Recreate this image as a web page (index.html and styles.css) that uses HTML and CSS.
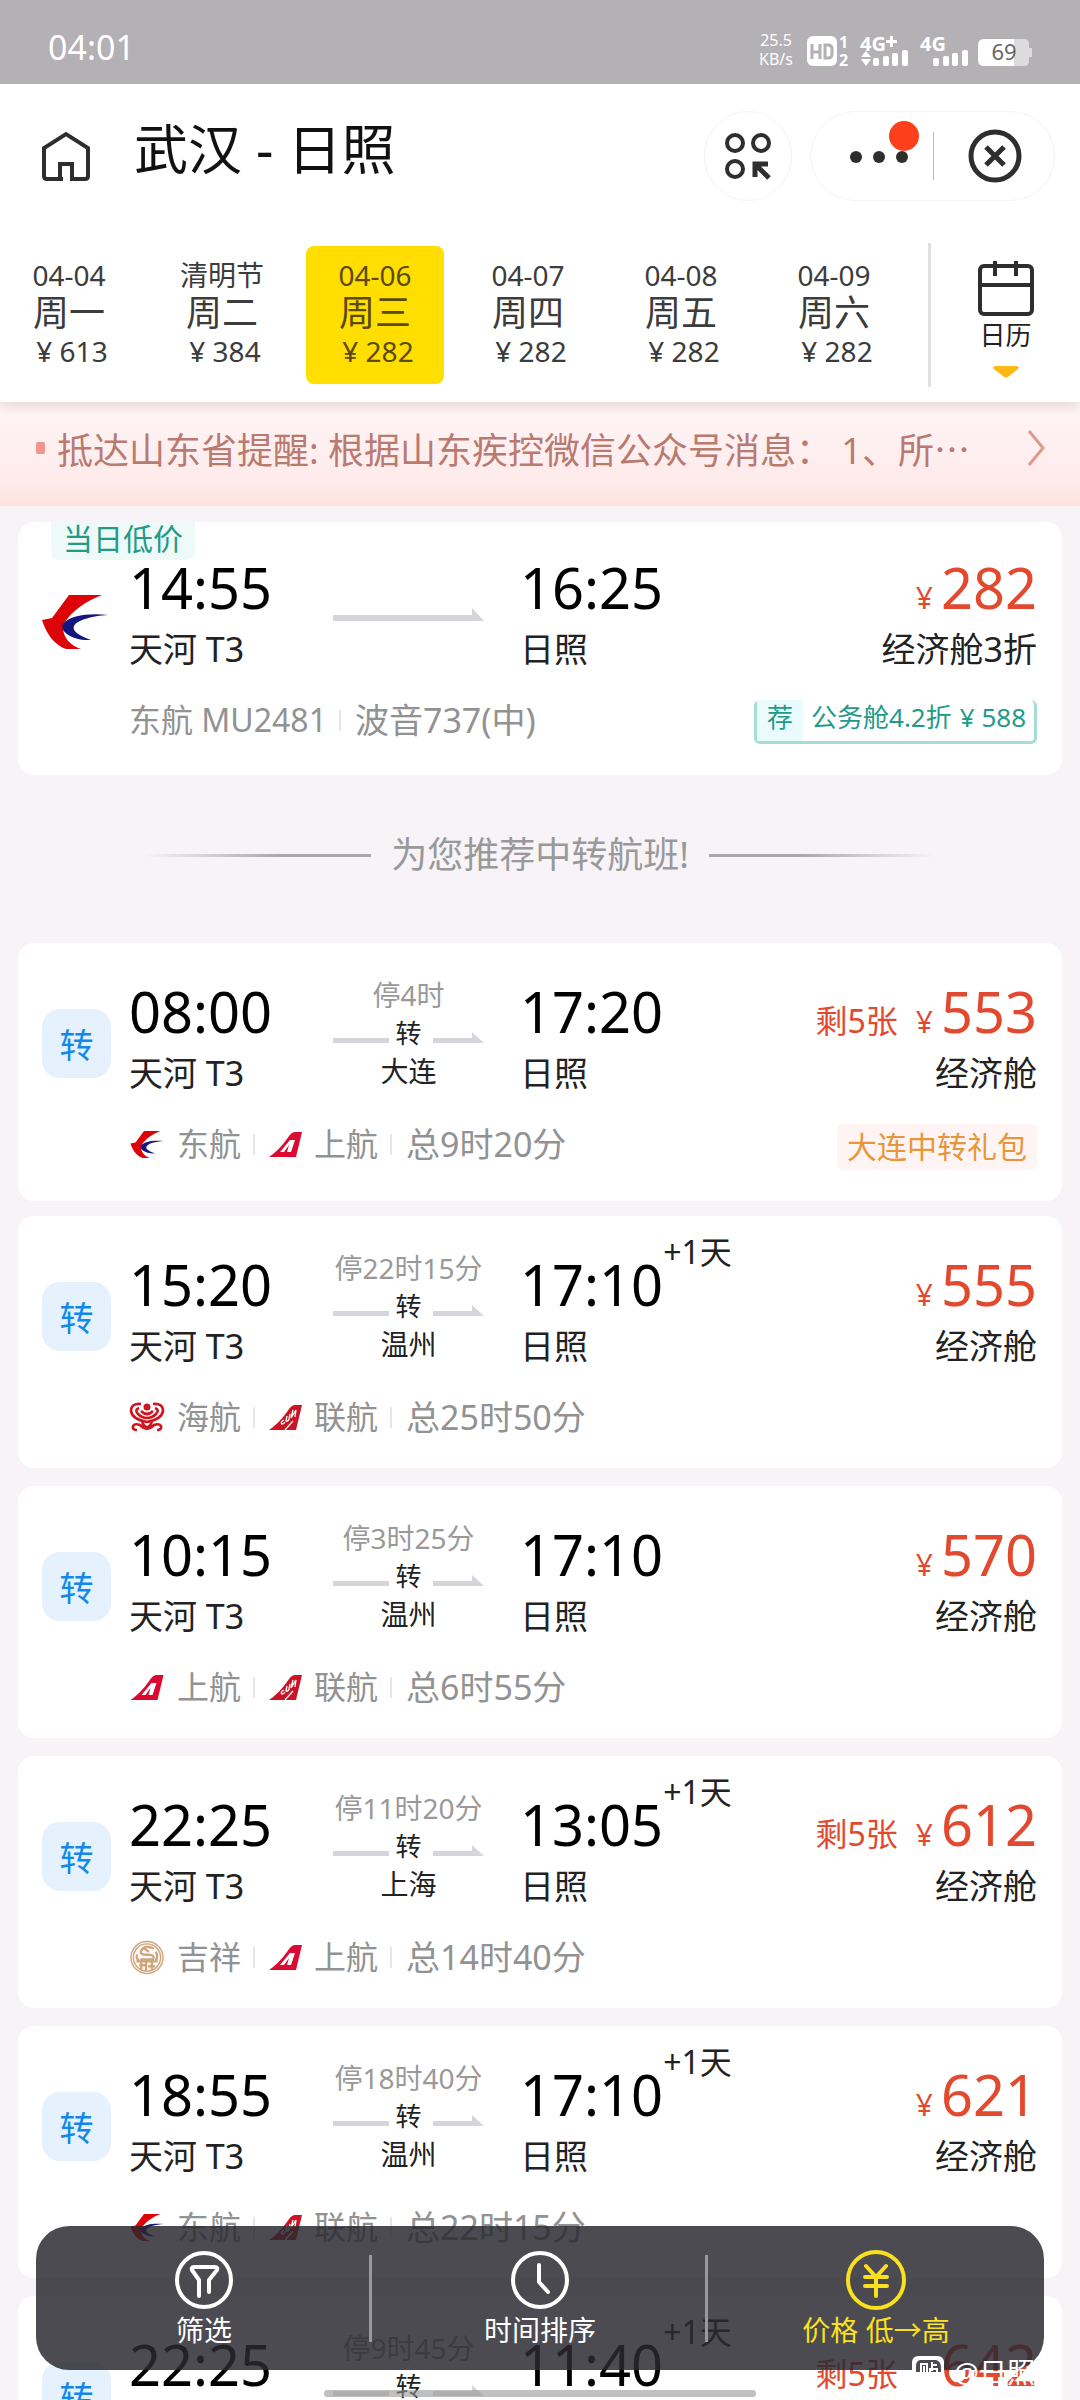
FILE: index.html
```html
<!DOCTYPE html>
<html lang="zh-CN">
<head>
<meta charset="utf-8">
<meta name="viewport" content="width=device-width, initial-scale=1">
<title>武汉 - 日照</title>
<link rel="stylesheet" href="styles.css">
</head>
<body>
<svg class="defs" aria-hidden="true">
  <symbol id="mu" viewBox="0 0 66 54">
    <path fill="#dc0406" d="M27 0H60C44 6 30 16 23 27C18 36 24 49 39 54H24C12 50 4 38 0 25L10 23Z"/>
    <path fill="#15157f" d="M66 20C48 18 28 20 21 29C17 36 30 46 49 45C36 40 30 36 32 31C35 25 50 21 66 20Z"/>
  </symbol>
  <symbol id="fm" viewBox="0 0 33 26">
    <path fill="#dc0a30" d="M0 26C10 19 15 12 20 5Q23 1 26 1H33L27 26Z"/>
    <path fill="#fff" d="M11 21L21 9H26L22 21H18L20 14L15 21Z"/>
  </symbol>
  <symbol id="kn" viewBox="0 0 33 26">
    <path fill="#c81424" d="M0 26C10 19 15 12 20 5Q23 1 26 1H33L27 26Z"/>
    <path fill="none" stroke="#fff" stroke-width="1.3" d="M15 16q-4 2-2 4q2 0 3-2M18 12l-1 5q2 1 3-2l1-5M24 6l-2 8l5-8l-1 7M16 26L24 17"/>
  </symbol>
  <symbol id="hu" viewBox="0 0 36 30">
    <g fill="none" stroke="#d0151f" stroke-width="2.6">
      <path d="M12 2Q2 1 2 9Q3 17 18 20Q33 17 34 9Q34 1 24 2"/>
      <path d="M10 6Q5 8 9 12Q13 16 18 16Q23 16 27 12Q31 8 26 6"/>
      <path d="M12 9Q18 15 24 9"/>
      <path d="M8 28Q3 28 4 24Q6 21 11 23Q18 30 25 23Q30 21 32 24Q33 28 28 28M13 20Q18 30 23 20"/>
    </g>
    <circle cx="18" cy="5" r="3.5" fill="#d0151f"/>
  </symbol>
  <symbol id="ho" viewBox="0 0 36 36">
    <g fill="none" stroke="#cfa57c" stroke-width="1.5">
      <circle cx="18" cy="18" r="16.5"/><circle cx="18" cy="18" r="14"/>
      <path stroke-width="2.4" d="M25 9Q16 4 12 11Q10 16 20 15Q27 16 24 20H11M8 15q-2 4 2 6M27 12q3 5 0 9M7 22H29M12 23v7M17 22v10M23 23v7M10 26h6M19 27h7M14 8l6 4"/>
    </g>
  </symbol>
  <symbol id="leg" viewBox="0 0 151 38"><path fill="#d5d5db" d="M0 24H56V29H0ZM100 24H139V18L151 29H100Z"/></symbol>
</svg>

<div class="app">
  <header class="head">
    <div class="status">
      <time>04:01</time>
      <svg width="278" height="84" viewBox="757 0 278 84" role="img" aria-label="信号与电量">
        <g fill="#fff">
          <text class="tiny" x="776" y="46" text-anchor="middle">25.5</text>
          <text class="tiny" x="776" y="65" text-anchor="middle">KB/s</text>
          <rect x="807" y="36" width="30" height="30" rx="6"/>
          <text class="net" x="839" y="48">1</text><text class="net" x="839" y="66">2</text>
          <text class="gen" x="860" y="51">4G</text><path d="M886 40h4v-4h3v4h4v3h-4v4h-3v-4h-4z"/>
          <path d="M861 57l5-6 5 6zM861 59h10l-5 7z"/>
          <rect x="873" y="58" width="6" height="8" rx="2"/><rect x="883" y="56" width="6" height="10" rx="2"/><rect x="892" y="53" width="6" height="13" rx="2"/><rect x="902" y="50" width="6" height="16" rx="2"/>
          <text class="gen" x="920" y="51">4G</text>
          <rect x="933" y="58" width="6" height="8" rx="2"/><rect x="943" y="56" width="6" height="10" rx="2"/><rect x="952" y="53" width="6" height="13" rx="2"/><rect x="962" y="50" width="6" height="16" rx="2"/>
        </g>
        <path fill="none" stroke="#b3b1b4" stroke-width="3" d="M812 44v15M820 44v15M812 52h8M825 45v13h3q4 0 4-4v-5q0-4-4-4z"/>
        <path fill="#dcdcdc" d="M1010 39h14q5 0 5 5v4h3v9h-3v4q0 5-5 5h-14z"/>
        <path fill="#fff" d="M984 39h30v27h-30q-6 0-6-6v-15q0-6 6-6z"/>
        <text class="batt" x="1004" y="60" text-anchor="middle">69</text>
      </svg>
    </div>
    <div class="nav">
      <button class="plain home" aria-label="首页">
        <svg width="48" height="50" viewBox="0 0 48 50" fill="none" stroke="#2e2e2e" stroke-width="4"><path d="M21 48H5Q2 48 2 45V17L24 3L46 17V45Q46 48 43 48H29M18 50V33H30V50"/></svg>
      </button>
      <h1>武汉 - 日照</h1>
      <button class="round" aria-label="服务">
        <svg width="46" height="48" viewBox="0 0 46 48" fill="none" stroke="#2e2e2e" stroke-width="4"><circle cx="10" cy="11" r="8"/><circle cx="36" cy="11" r="8"/><circle cx="10" cy="37" r="8"/><path stroke-width="5" d="M30 45V32H43M31 33L44 46"/></svg>
      </button>
      <div class="capsule">
        <button class="plain" aria-label="更多">
          <svg class="more" width="100" height="60" viewBox="0 0 100 60"><g fill="#2e2e2e"><circle cx="27" cy="31" r="6"/><circle cx="50" cy="31" r="6"/><circle cx="73" cy="31" r="6"/></g><circle cx="75" cy="10" r="15" fill="#fd3f1c"/></svg>
        </button>
        <i></i>
        <button class="plain" aria-label="关闭">
          <svg width="54" height="54" viewBox="0 0 54 54" fill="none" stroke="#2e2e2e"><circle cx="27" cy="27" r="24" stroke-width="5"/><path stroke-width="5" d="M18 18L36 36M36 18L18 36"/></svg>
        </button>
      </div>
    </div>
    <div class="dates">
      <div class="days">
        <button class="day"><span>04-04</span><b>周一</b><span class="fare">¥ 613</span></button>
        <button class="day"><span>清明节</span><b>周二</b><span class="fare">¥ 384</span></button>
        <button class="day on"><span>04-06</span><b>周三</b><span class="fare">¥ 282</span></button>
        <button class="day"><span>04-07</span><b>周四</b><span class="fare">¥ 282</span></button>
        <button class="day"><span>04-08</span><b>周五</b><span class="fare">¥ 282</span></button>
        <button class="day"><span>04-09</span><b>周六</b><span class="fare">¥ 282</span></button>
      </div>
      <button class="calendar">
        <svg width="58" height="56" viewBox="0 0 58 56" fill="none" stroke="#2e2e2e" stroke-width="4"><rect x="3" y="6" width="52" height="48" rx="4"/><path d="M3 25H55M18 1V16M39 1V16"/></svg>
        <span>日历</span>
        <svg width="26" height="12" viewBox="0 0 26 12"><path fill="#fdb813" d="M2 0H24Q27 1 25 3L15 11Q13 12 11 11L1 3Q-1 1 2 0Z"/></svg>
      </button>
    </div>
  </header>

  <a class="notice" href="#notice">
    <i></i>
    <span>抵达山东省提醒: 根据山东疾控微信公众号消息： 1、所⋯</span>
    <svg width="18" height="36" viewBox="0 0 18 36" fill="none" stroke="#e09a8c" stroke-width="3"><path d="M2 1L16 18L2 35"/></svg>
  </a>

  <main class="list">
    <article class="card nonstop">
      <span class="badge">当日低价</span>
      <svg class="carrier" width="66" height="54"><use href="#mu"/></svg>
      <div class="end"><time>14:55</time><p>天河 T3</p></div>
      <div class="route direct"><svg width="151" height="38" viewBox="0 0 151 38"><path fill="#d5d5db" d="M0 20H139V13L151 26H0Z"/></svg></div>
      <div class="end to"><time>16:25</time><p>日照</p></div>
      <div class="cost"><div class="sum"><small>¥</small><strong>282</strong></div><p>经济舱3折</p></div>
      <div class="meta"><span>东航 MU2481</span><i></i><span class="total">波音737(中)</span></div>
      <div class="tag upgrade"><b>荐</b><span>公务舱4.2折</span><span>¥ 588</span></div>
    </article>

    <h2 class="split"><i></i>为您推荐中转航班!<i class="r"></i></h2>

    <article class="card tagged">
      <span class="tile">转</span>
      <div class="end"><time>08:00</time><p>天河 T3</p></div>
      <div class="route"><em>停4时</em><span class="via"><svg width="151" height="38"><use href="#leg"/></svg><span>转</span></span><span>大连</span></div>
      <div class="end to"><time>17:20</time><p>日照</p></div>
      <div class="cost"><div class="sum"><span>剩5张</span><small>¥</small><strong>553</strong></div><p>经济舱</p></div>
      <div class="meta"><svg width="33" height="27"><use href="#mu"/></svg><span>东航</span><i></i><svg width="33" height="26"><use href="#fm"/></svg><span>上航</span><i></i><span class="total">总9时20分</span></div>
      <div class="tag gift">大连中转礼包</div>
    </article>

    <article class="card">
      <span class="tile">转</span>
      <div class="end"><time>15:20</time><p>天河 T3</p></div>
      <div class="route"><em>停22时15分</em><span class="via"><svg width="151" height="38"><use href="#leg"/></svg><span>转</span></span><span>温州</span></div>
      <div class="end to"><time>17:10<sup>+1天</sup></time><p>日照</p></div>
      <div class="cost"><div class="sum"><small>¥</small><strong>555</strong></div><p>经济舱</p></div>
      <div class="meta"><svg width="36" height="30"><use href="#hu"/></svg><span>海航</span><i></i><svg width="33" height="26"><use href="#kn"/></svg><span>联航</span><i></i><span class="total">总25时50分</span></div>
    </article>

    <article class="card">
      <span class="tile">转</span>
      <div class="end"><time>10:15</time><p>天河 T3</p></div>
      <div class="route"><em>停3时25分</em><span class="via"><svg width="151" height="38"><use href="#leg"/></svg><span>转</span></span><span>温州</span></div>
      <div class="end to"><time>17:10</time><p>日照</p></div>
      <div class="cost"><div class="sum"><small>¥</small><strong>570</strong></div><p>经济舱</p></div>
      <div class="meta"><svg width="33" height="26"><use href="#fm"/></svg><span>上航</span><i></i><svg width="33" height="26"><use href="#kn"/></svg><span>联航</span><i></i><span class="total">总6时55分</span></div>
    </article>

    <article class="card">
      <span class="tile">转</span>
      <div class="end"><time>22:25</time><p>天河 T3</p></div>
      <div class="route"><em>停11时20分</em><span class="via"><svg width="151" height="38"><use href="#leg"/></svg><span>转</span></span><span>上海</span></div>
      <div class="end to"><time>13:05<sup>+1天</sup></time><p>日照</p></div>
      <div class="cost"><div class="sum"><span>剩5张</span><small>¥</small><strong>612</strong></div><p>经济舱</p></div>
      <div class="meta"><svg width="35" height="35"><use href="#ho"/></svg><span>吉祥</span><i></i><svg width="33" height="26"><use href="#fm"/></svg><span>上航</span><i></i><span class="total">总14时40分</span></div>
    </article>

    <article class="card">
      <span class="tile">转</span>
      <div class="end"><time>18:55</time><p>天河 T3</p></div>
      <div class="route"><em>停18时40分</em><span class="via"><svg width="151" height="38"><use href="#leg"/></svg><span>转</span></span><span>温州</span></div>
      <div class="end to"><time>17:10<sup>+1天</sup></time><p>日照</p></div>
      <div class="cost"><div class="sum"><small>¥</small><strong>621</strong></div><p>经济舱</p></div>
      <div class="meta"><svg width="33" height="27"><use href="#mu"/></svg><span>东航</span><i></i><svg width="33" height="26"><use href="#kn"/></svg><span>联航</span><i></i><span class="total">总22时15分</span></div>
    </article>

    <article class="card">
      <span class="tile">转</span>
      <div class="end"><time>22:25</time></div>
      <div class="route"><em>停9时45分</em><span class="via"><svg width="151" height="38"><use href="#leg"/></svg><span>转</span></span></div>
      <div class="end to"><time>11:40<sup>+1天</sup></time></div>
      <div class="cost"><div class="sum"><span>剩5张</span><small>¥</small><strong>642</strong></div></div>
    </article>
  </main>

  <nav class="bar">
    <button>
      <svg width="60" height="60" viewBox="0 0 60 60" fill="none" stroke="#fff" stroke-width="4" stroke-linecap="round" stroke-linejoin="round"><circle cx="30" cy="30" r="27"/><path d="M25 46V30L18 20Q17 17 20 17H41Q44 17 43 20L35 30V42"/></svg>
      <span>筛选</span>
    </button>
    <button>
      <svg width="60" height="60" viewBox="0 0 60 60" fill="none" stroke="#fff" stroke-width="4" stroke-linecap="round"><circle cx="30" cy="30" r="27"/><path d="M29 15V32L38 42"/></svg>
      <span>时间排序</span>
    </button>
    <button class="on">
      <svg width="60" height="60" viewBox="0 0 60 60" fill="none" stroke="#fbe01f" stroke-width="4" stroke-linecap="round"><circle cx="30" cy="30" r="28"/><path d="M20 16L30 27L40 16M19 27H41M19 36H41M30 27V46"/></svg>
      <span>价格 低→高</span>
    </button>
  </nav>
  <div class="mark"><svg width="32" height="32" viewBox="0 0 32 32"><rect width="32" height="32" rx="6" fill="#fff"/><path fill="#4b4a52" d="M8 4H24Q29 5 29 12V16H4V10Q4 5 8 4Z"/><path fill="none" stroke="#fff" stroke-width="2" d="M9 17V8H15V17M12 10V19M20 6V15M20 9H25M18 17V13H25V17"/></svg><span>@日照</span></div>
  <div class="pill"></div>
</div>
</body>
</html>
```
FILE: styles.css
```css
* { box-sizing: border-box; }

body {
  margin: 0;
  background: #f7f3f7;
  color: #222;
  font-family: "Noto Sans", "Noto Sans CJK SC", sans-serif;
  font-size: 34px;
}

h1, h2, p { margin: 0; font-weight: 400; }
b, strong { font-weight: 400; }
i, em { font-style: normal; }
svg { display: block; flex: none; }

button {
  border: 0;
  padding: 0;
  background: none;
  color: inherit;
  font: inherit;
}

.defs { position: absolute; width: 0; height: 0; }

.app {
  position: relative;
  height: 100vh;
  overflow: hidden;
}

/* header */
.head {
  position: relative;
  z-index: 1;
  background: #fff;
  box-shadow: 0 4px 12px rgba(0, 0, 0, .12);
}

.status {
  display: flex;
  justify-content: space-between;
  align-items: center;
  height: 84px;
  padding: 0 45px 0 48px;
  background: #b3b1b4;
  color: #fff;
}

.status time { padding-top: 10px; }
.tiny { font-size: 16px; }
.net { font-size: 16px; font-weight: 700; }
.gen { font-size: 20px; font-weight: 700; }
.batt { font-size: 22px; fill: #666; }

.nav {
  display: flex;
  align-items: center;
  padding: 27px 25px 27px 42px;
}

.nav h1 {
  flex: 1;
  align-self: flex-start;
  padding-left: 44px;
  font-size: 54px;
  line-height: 76px;
  color: #111;
}

.more { overflow: visible; }

.round, .capsule {
  display: flex;
  align-items: center;
  height: 90px;
  border: 1px solid #f4f4f4;
  border-radius: 45px;
}

.round {
  justify-content: center;
  width: 88px;
  margin-right: 18px;
}

.capsule { width: 245px; padding: 0 32px 0 18px; }
.capsule i { width: 1px; height: 48px; margin: 0 34px 0 4px; background: #bbb; }

.dates {
  display: flex;
  padding: 15px 0;
}

.days {
  flex: 1;
  display: grid;
  grid-template-columns: repeat(6, 138px);
  gap: 15px;
  padding: 3px 0;
}

.day {
  display: flex;
  flex-direction: column;
  align-items: center;
  padding: 10px 0 14px;
  border-radius: 8px;
  color: #3c3c3c;
  font-size: 28px;
  line-height: 38px;
}

.day b { font-size: 36px; }
.day .fare { padding-left: 6px; }
.day.on { background: #ffde00; color: #5a4a10; }

.calendar {
  display: flex;
  flex-direction: column;
  align-items: center;
  width: 152px;
  height: 144px;
  padding-top: 17px;
  border-left: 3px solid #e0e0e0;
  font-size: 26px;
  line-height: 38px;
}

.calendar span { padding-bottom: 12px; }

/* travel notice */
.notice {
  display: flex;
  align-items: center;
  height: 104px;
  padding: 0 35px 12px 36px;
  background: linear-gradient(#fff5f5, #feebec 75%, #ffe3dc);
  color: #b97a70;
  font-size: 36px;
  text-decoration: none;
}

.notice span { flex: 1; padding-left: 12px; white-space: nowrap; }
.notice i { width: 9px; height: 12px; border-radius: 2px; background: #f0968c; }

/* flights */
.list {
  display: flex;
  flex-direction: column;
  gap: 18px;
  padding: 16px 18px;
}

.card {
  position: relative;
  display: grid;
  grid-template-columns: 69px 186px 151px 1fr auto;
  grid-template-rows: 148px auto;
  column-gap: 18px;
  align-items: start;
  min-height: 252px;
  padding: 33px 25px 31px 24px;
  border-radius: 16px;
  background: #fff;
}

.nonstop { padding-top: 30px; }
.tagged { margin-bottom: -3px; }

.badge {
  position: absolute;
  top: 0;
  left: 33px;
  padding: 0 12px 4px;
  border-radius: 0 0 8px 8px;
  background: #eefaf8;
  color: #239a88;
  font-size: 30px;
  line-height: 34px;
}

.carrier { margin-top: 43px; }

.tile {
  display: grid;
  place-items: center;
  height: 69px;
  margin-top: 33px;
  border-radius: 18px;
  background: #e5f1fd;
  color: #1288ea;
}

.end, .cost { padding-top: 4px; line-height: 62px; }
.end.to { padding-left: 18px; }
.end time { display: block; position: relative; font-size: 56px; color: #000; }

sup {
  position: absolute;
  top: -32px;
  font-size: 32px;
  color: #222;
  vertical-align: baseline;
}

.route {
  display: flex;
  flex-direction: column;
  align-items: center;
  font-size: 28px;
  line-height: 38px;
  white-space: nowrap;
}

.route em { color: #999; }
.route.direct { padding-top: 43px; }
.via { display: grid; place-items: center; font-size: 26px; }
.via > * { grid-area: 1 / 1; }

.cost { text-align: right; }
.sum { color: #e2492f; font-size: 32px; height: 62px; }
.sum strong { font-size: 56px; margin-left: 8px; }
.sum small { font-size: 30px; margin-left: 18px; }

.meta {
  grid-column: 2 / 5;
  grid-row: 2;
  display: flex;
  align-items: center;
  height: 40px;
  color: #929292;
  font-size: 32px;
  line-height: 40px;
  white-space: nowrap;
}

.meta svg { width: 36px; }
.meta svg + span { margin-left: 12px; }
.meta i { width: 2px; height: 21px; margin: 0 14px 0 12px; background: #e6e6e6; }
.meta i + svg { width: 33px; }
.total { font-size: 34px; }

.tag {
  grid-column: 4 / 6;
  grid-row: 2;
  justify-self: end;
  font-size: 26px;
  white-space: nowrap;
}

.upgrade {
  display: flex;
  height: 44px;
  border: 3px solid #a5dcd3;
  border-top: 0;
  border-radius: 6px;
  color: #239a88;
  line-height: 34px;
}

.upgrade b { padding: 0 10px; background: #e9fbfd; }
.upgrade span { padding: 0 8px; }
.upgrade span + span { padding-left: 0; }

.gift {
  padding: 0 10px;
  border-radius: 6px;
  background: #fff4f4;
  color: #e8963a;
  font-size: 30px;
  line-height: 46px;
}

.split {
  display: flex;
  justify-content: center;
  align-items: center;
  gap: 20px;
  padding: 42px 0 50px;
  color: #999;
  font-size: 36px;
  line-height: 40px;
}

.split i { width: 226px; height: 3px; background: linear-gradient(90deg, transparent, #a8a8a8 60%); }
.split .r { background: linear-gradient(270deg, transparent, #a8a8a8 60%); }

/* sort bar */
.bar {
  position: absolute;
  right: 36px;
  bottom: 30px;
  left: 36px;
  display: grid;
  grid-template-columns: repeat(3, 1fr);
  height: 144px;
  border-radius: 33px;
  background: rgba(40, 41, 48, .84);
  color: #fff;
  font-size: 28px;
  line-height: 40px;
}

.bar button {
  display: flex;
  flex-direction: column;
  align-items: center;
  padding-top: 24px;
  background: linear-gradient(#999, #999) right center / 3px 87px no-repeat;
}

.bar .on { background: none; color: #fbe01f; }

.mark {
  position: absolute;
  right: 45px;
  bottom: 8px;
  display: flex;
  align-items: center;
  gap: 10px;
  color: #fff;
  font-size: 28px;
  line-height: 40px;
}

.pill {
  position: absolute;
  right: 30%;
  bottom: 3px;
  left: 30%;
  height: 7px;
  border-radius: 4px;
  background: rgba(150, 150, 150, .6);
}
```
